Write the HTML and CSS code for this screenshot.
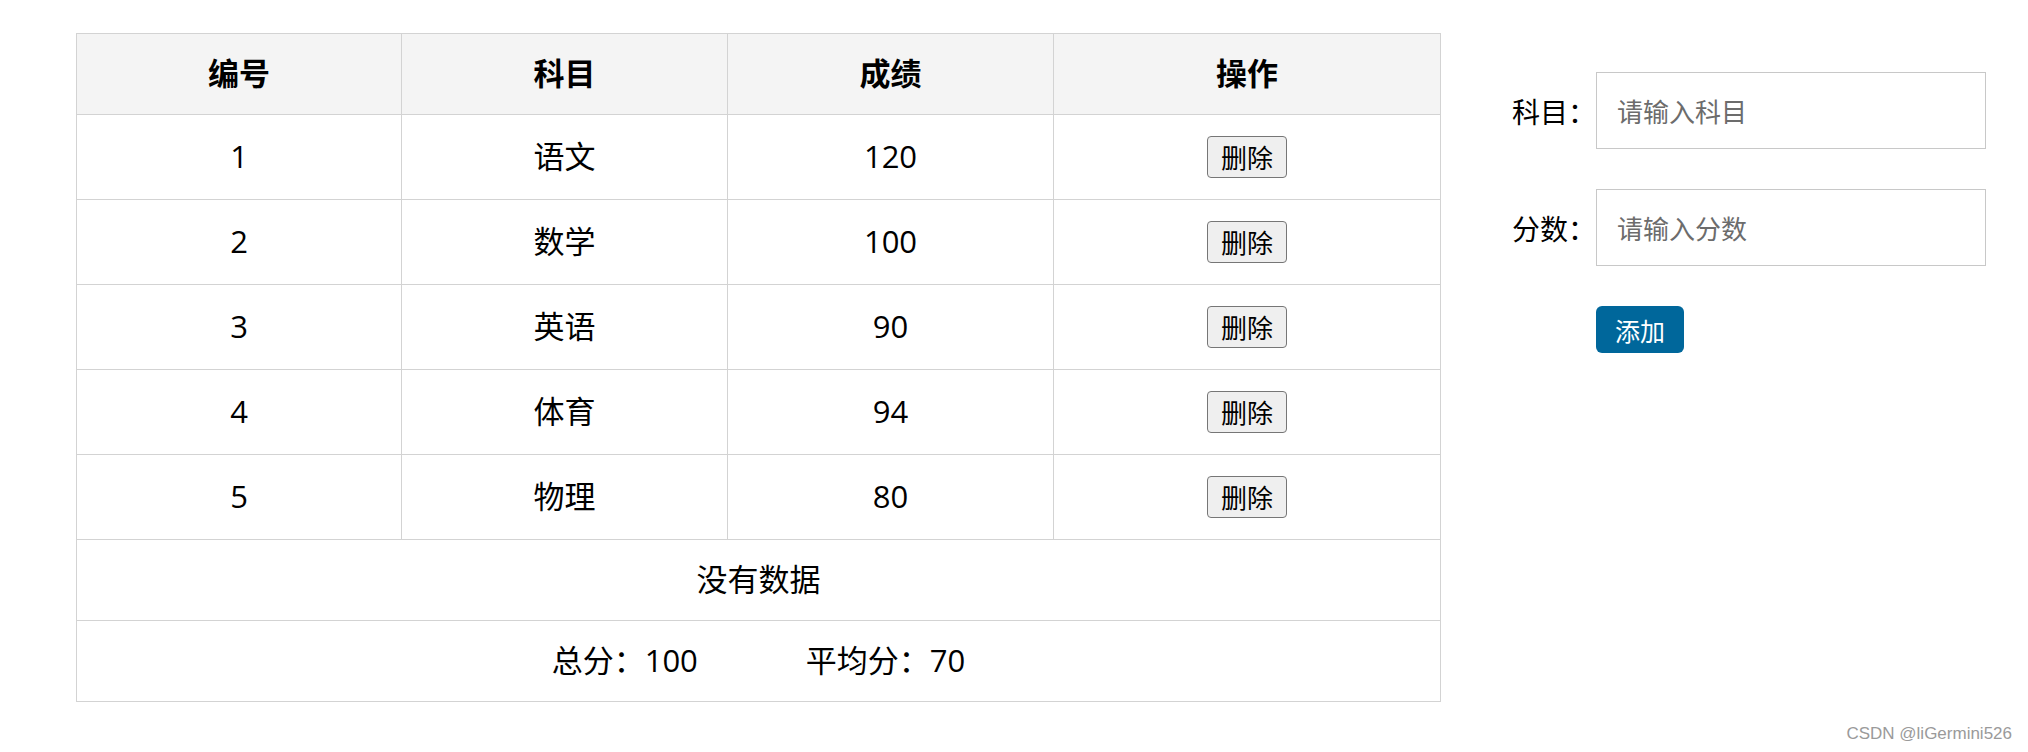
FILE: index.html
```html
<!DOCTYPE html>
<html lang="zh-CN">
<head>
<meta charset="utf-8">
<title>成绩</title>
<link rel="stylesheet" href="styles.css">
</head>
<body>
<div class="page">
  <table class="scores">
    <colgroup>
      <col class="c1"><col class="c2"><col class="c3"><col class="c4">
    </colgroup>
    <thead>
      <tr><th>编号</th><th>科目</th><th>成绩</th><th>操作</th></tr>
    </thead>
    <tbody>
      <tr><td>1</td><td>语文</td><td>120</td><td><button class="del">删除</button></td></tr>
      <tr><td>2</td><td>数学</td><td>100</td><td><button class="del">删除</button></td></tr>
      <tr><td>3</td><td>英语</td><td>90</td><td><button class="del">删除</button></td></tr>
      <tr><td>4</td><td>体育</td><td>94</td><td><button class="del">删除</button></td></tr>
      <tr><td>5</td><td>物理</td><td>80</td><td><button class="del">删除</button></td></tr>
      <tr class="wide"><td colspan="4">没有数据</td></tr>
      <tr class="wide"><td colspan="4"><span class="sum">总分：100</span><span class="avg">平均分：70</span></td></tr>
    </tbody>
  </table>
  <form class="form">
    <label class="lbl">科目：</label>
    <input class="inp" type="text" placeholder="请输入科目">
    <label class="lbl">分数：</label>
    <input class="inp" type="text" placeholder="请输入分数">
    <span></span>
    <div><button type="button" class="add">添加</button></div>
  </form>
</div>
<div class="mark">CSDN @liGermini526</div>
</body>
</html>
```
FILE: styles.css
```css
html, body {
  margin: 0;
  padding: 0;
  background: #fff;
}
body {
  font-family: "Open Sans", "Noto Sans CJK SC", sans-serif;
  color: #000;
  width: 2028px;
  height: 752px;
  position: relative;
  overflow: hidden;
}
.page {
  display: flex;
  align-items: flex-start;
  padding: 33px 0 0 76px;
}
.scores {
  border-collapse: collapse;
  table-layout: fixed;
  width: 1364px;
  font-size: 31px;
}
.c1 { width: 325px; }
.c2 { width: 326px; }
.c3 { width: 326px; }
.c4 { width: 387px; }
.scores th, .scores td {
  border: 1px solid #d3d3d3;
  text-align: center;
  vertical-align: middle;
  padding: 0;
  line-height: 1.2;
}
.scores th {
  background: #f4f4f4;
  font-weight: bold;
  height: 80px;
}
.scores td {
  height: 84px;
}
.scores tr.wide td {
  height: 80px;
}
.del {
  font-family: "Noto Sans CJK SC", sans-serif;
  font-size: 26px;
  line-height: 1.3;
  padding: 3px 13px;
  background: #efefef;
  border: 1px solid #767676;
  border-radius: 4px;
  color: #000;
}
.sum { margin-right: 108px; }
.form {
  display: grid;
  grid-template-columns: auto 390px;
  column-gap: 0;
  row-gap: 40px;
  align-items: center;
  margin: 39px 0 0 71px;
}
.lbl {
  font-family: "Noto Sans CJK SC", sans-serif;
  font-size: 28px;
  text-align: right;
  white-space: nowrap;
}
.inp {
  box-sizing: border-box;
  width: 390px;
  height: 77px;
  border: 1px solid #c8c8c8;
  padding: 0 20px;
  font-family: "Noto Sans CJK SC", sans-serif;
  font-size: 26px;
  outline: none;
}
.inp::placeholder {
  color: #6c6c6c;
}
.add {
  width: 88px;
  height: 47px;
  border: none;
  border-radius: 6px;
  background: #00679b;
  color: #fff;
  font-family: "Noto Sans CJK SC", sans-serif;
  font-size: 25px;
  padding: 0;
}
.mark {
  position: absolute;
  right: 16px;
  bottom: 8px;
  font-family: "Liberation Sans", Arial, sans-serif;
  font-size: 17px;
  color: #9a9a9a;
}
```
